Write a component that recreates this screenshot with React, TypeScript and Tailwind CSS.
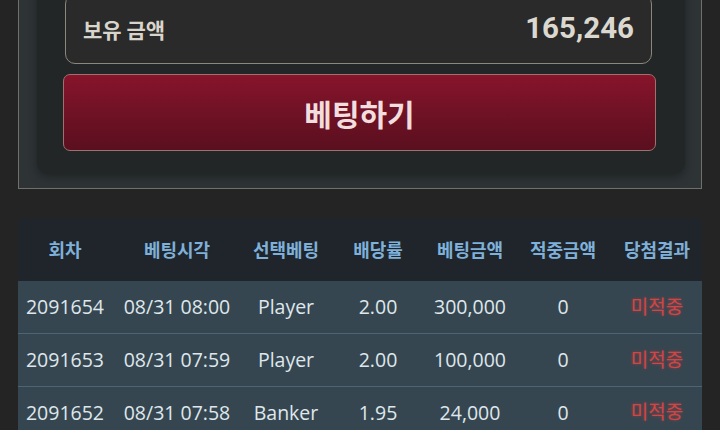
const ROWS = [
  { no: "2091654", time: "08/31 08:00", pick: "Player", odds: "2.00", amount: "300,000", win: "0", result: "미적중" },
  { no: "2091653", time: "08/31 07:59", pick: "Player", odds: "2.00", amount: "100,000", win: "0", result: "미적중" },
  { no: "2091652", time: "08/31 07:58", pick: "Banker", odds: "1.95", amount: "24,000", win: "0", result: "미적중" },
];

const HEADERS = [
  { label: "회차", w: "w-[94px]" },
  { label: "베팅시각", w: "w-[130px]" },
  { label: "선택베팅", w: "w-[88px]" },
  { label: "배당률", w: "w-[96px]" },
  { label: "베팅금액", w: "w-[88px]" },
  { label: "적중금액", w: "w-[98px]" },
  { label: "당첨결과", w: "w-[90px]" },
];

export default function App() {
  return (
    <div className="min-h-[430px] bg-[#232423] overflow-hidden font-['Open_Sans','Noto_Sans_CJK_KR',sans-serif]">
      <div className="-mt-[37px] px-[18px]">
        {/* bet panel */}
        <div className="border border-[#6f6f6b] bg-[#2e3436] pt-[18px] pb-[15px] pl-[18px] pr-[16px]">
          <div className="rounded-[10px] bg-[#222627] pt-[12px] pb-[22px] pl-[26px] pr-[29px] shadow-[0_4px_10px_rgba(0,0,0,0.35)]">
            <div className="ml-[2px] mr-[4px] flex h-[70px] items-center justify-between rounded-[10px] border border-[#8c877c] bg-[#292a29] px-[17px]">
              <span className="font-['Noto_Sans_CJK_KR',sans-serif] text-[21px] font-bold text-[#d9d5cc] leading-none">
                보유 금액
              </span>
              <span className="font-['Roboto',sans-serif] text-[29.5px] font-bold text-[#dcd8d0] leading-none">
                165,246
              </span>
            </div>
            <button className="mt-[10px] flex h-[77px] w-full items-center justify-center rounded-[7px] border border-[#a0706e] bg-gradient-to-b from-[#87142b] to-[#5a0f1f]">
              <span className="font-['Noto_Sans_CJK_KR',sans-serif] text-[30px] font-bold text-[#f2dede] leading-none">
                베팅하기
              </span>
            </button>
          </div>
        </div>

        {/* history table */}
        <table className="mt-[29px] w-[684px] table-fixed border-collapse">
          <thead>
            <tr className="h-[63px] bg-[#1f252a]">
              {HEADERS.map((h) => (
                <th
                  key={h.label}
                  className={`${h.w} font-['Noto_Sans_CJK_KR',sans-serif] text-[18px] font-bold text-[#7eb0d9] text-center whitespace-nowrap`}
                >
                  {h.label}
                </th>
              ))}
            </tr>
          </thead>
          <tbody>
            {ROWS.map((r) => (
              <tr key={r.no} className="h-[52.5px] bg-[#364650] border-b border-[#4b6574] text-[19.5px] text-[#dfe7ec] text-center whitespace-nowrap">
                <td>{r.no}</td>
                <td>{r.time}</td>
                <td>{r.pick}</td>
                <td>{r.odds}</td>
                <td>{r.amount}</td>
                <td>{r.win}</td>
                <td className="text-[19px] text-[#cf4646] [text-shadow:0_0_3px_rgba(220,60,60,0.6)]">{r.result}</td>
              </tr>
            ))}
          </tbody>
        </table>
      </div>
    </div>
  );
}
